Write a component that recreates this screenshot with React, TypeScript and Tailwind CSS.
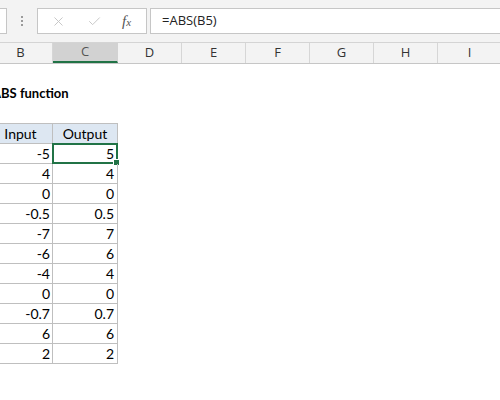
import { X, Check } from "lucide-react";

const cols = [
  { name: "B", w: "w-[64px] -ml-[11px]" },
  { name: "C", w: "w-[65px]" },
  { name: "D", w: "w-[64px]" },
  { name: "E", w: "w-[64px]" },
  { name: "F", w: "w-[64px]" },
  { name: "G", w: "w-[64px]" },
  { name: "H", w: "w-[64px]" },
  { name: "I", w: "w-[64px]" },
];

const data = [
  ["-5", "5"],
  ["4", "4"],
  ["0", "0"],
  ["-0.5", "0.5"],
  ["-7", "7"],
  ["-6", "6"],
  ["-4", "4"],
  ["0", "0"],
  ["-0.7", "0.7"],
  ["6", "6"],
  ["2", "2"],
];

function App() {
  return (
    <div className="w-[500px] h-[400px] overflow-hidden bg-white font-['Lato',sans-serif] text-[14px] text-black">
      {/* formula bar */}
      <div className="h-[43px] bg-[#f3f3f3] flex pt-[8px] border-b border-[#d4d4d4]">
        <div className="w-[7px] h-[26px] bg-white border border-l-0 border-[#c6c6c6]" />
        <div className="w-[30px] flex flex-col items-center justify-center gap-[2px] h-[26px]">
          <span className="w-[2px] h-[2px] bg-[#9a9a9a]" />
          <span className="w-[2px] h-[2px] bg-[#9a9a9a]" />
          <span className="w-[2px] h-[2px] bg-[#9a9a9a]" />
        </div>
        <div className="w-[110px] h-[26px] bg-white border border-[#c6c6c6] flex items-center">
          <X className="ml-[13px] w-[15px] h-[15px] text-[#c4c4c4]" strokeWidth={1.5} />
          <Check className="ml-[21px] w-[15px] h-[15px] text-[#c4c4c4]" strokeWidth={1.5} />
          <span className="ml-[20px] font-['Liberation_Serif',serif] italic text-[15px] text-[#555]">
            f<span className="text-[11px]">x</span>
          </span>
        </div>
        <div className="flex-1 ml-[3px] h-[26px] bg-white border border-r-0 border-[#c6c6c6] flex items-center pl-[11px] font-['Open_Sans',sans-serif] text-[13px] text-[#222]">
          =ABS(B5)
        </div>
      </div>

      {/* column headers */}
      <div className="h-[21px] flex bg-[#f3f3f3] border-b border-[#c6c6c6] font-['Open_Sans',sans-serif] text-[13px] text-[#333]">
        {cols.map((c) => (
          <div
            key={c.name}
            className={`${c.w} shrink-0 flex items-center justify-center border-r ${
              c.name === "C"
                ? "bg-[#d2d2d2] border-[#d2d2d2] border-b-2 border-b-[#217346] text-[#555]"
                : "border-[#d6d6d6]"
            }`}
          >
            {c.name}
          </div>
        ))}
      </div>

      {/* sheet */}
      <div className="flex flex-col">
        <div className="h-[20px]" />
        <div className="h-[20px] flex items-center -ml-[8px] font-bold text-[13px]">ABS function</div>
        <div className="h-[19px]" />
        <div className="h-[21px] w-[118px] flex border-y border-[#bfbfbf]">
          <div className="w-[64px] -ml-[11px] flex items-center justify-center bg-[#dde7f2] border-r border-[#bfbfbf]">
            Input
          </div>
          <div className="w-[65px] flex items-center justify-center bg-[#dde7f2] border-r border-[#bfbfbf]">
            Output
          </div>
        </div>
        {data.map(([a, b], i) => (
          <div key={i} className="h-[20px] flex border-b border-[#bfbfbf] w-[118px]">
            <div className="w-[64px] -ml-[11px] flex items-center justify-end pr-[2px] border-r border-[#bfbfbf]">
              {a}
            </div>
            <div className="relative w-[65px] flex items-center justify-end pr-[3px] border-r border-[#bfbfbf]">
              {b}
              {i === 0 && (
                <>
                  <div className="absolute -left-px -top-px w-[66px] h-[21px] border-2 border-[#217346]" />
                  <div className="absolute -right-[3px] -bottom-[3px] w-[5px] h-[5px] bg-[#217346] border border-white box-content" />
                </>
              )}
            </div>
          </div>
        ))}
      </div>
    </div>
  );
}

export default App;
